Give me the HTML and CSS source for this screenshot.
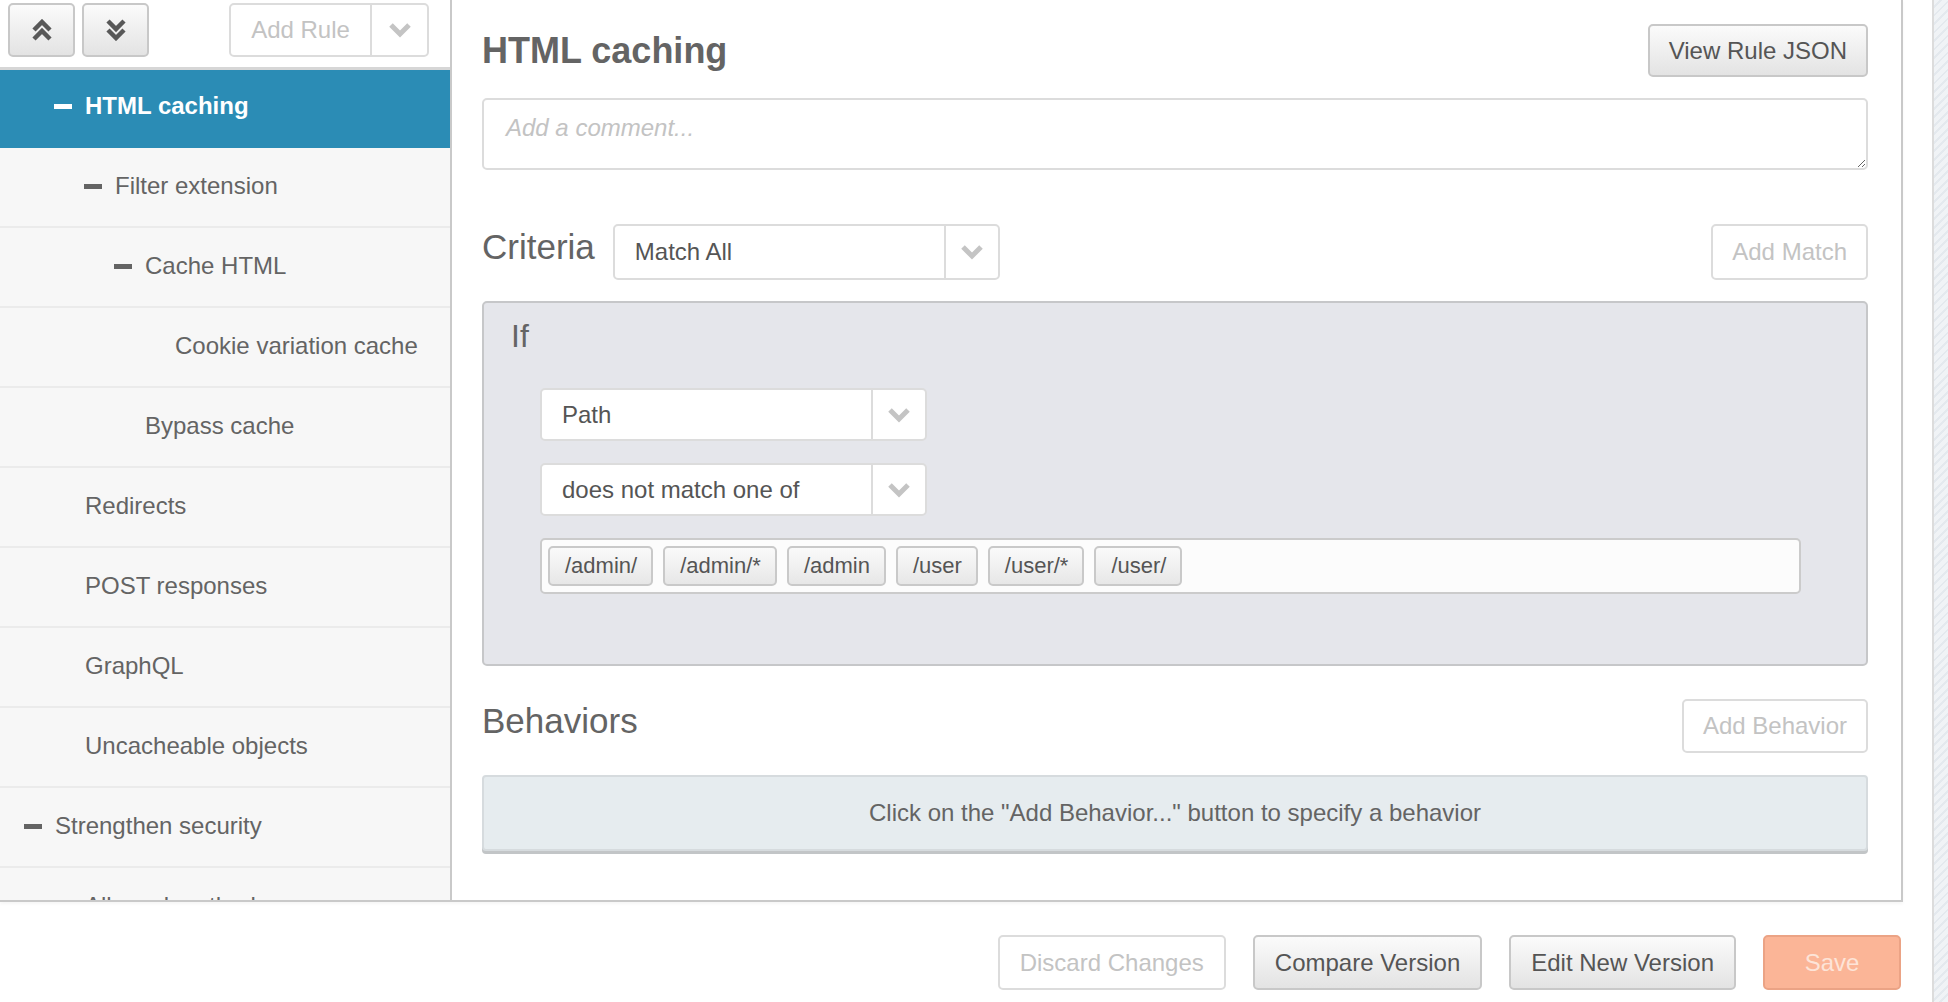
FILE: index.html
```html
<!DOCTYPE html>
<html lang="en">
<head>
<meta charset="utf-8">
<title>Rule editor – HTML caching</title>
<link rel="stylesheet" href="styles.css">
</head>
<body>
<div class="page">
  <div class="workspace">
    <div class="editor">
      <aside class="sidebar">
        <div class="tree-toolbar">
          <button class="btn icon-btn" aria-label="Collapse all">
            <svg width="24" height="22" viewBox="0 0 24 22"><polyline points="4,11 12,3 20,11" /><polyline points="4,20 12,12 20,20" /></svg>
          </button>
          <button class="btn icon-btn" aria-label="Expand all">
            <svg width="24" height="22" viewBox="0 0 24 22"><polyline points="4,2 12,10 20,2" /><polyline points="4,11 12,19 20,11" /></svg>
          </button>
          <div class="split-btn">
            <span class="split-label">Add Rule</span>
            <span class="split-caret"><svg class="chev" width="24" height="16" viewBox="0 0 24 16"><polyline points="3,3 12,12 21,3" /></svg></span>
          </div>
        </div>
        <ul class="tree">
          <li class="node l1 selected"><span class="dash"></span>HTML caching</li>
          <li class="node l2"><span class="dash"></span>Filter extension</li>
          <li class="node l3"><span class="dash"></span>Cache HTML</li>
          <li class="node l4">Cookie variation cache</li>
          <li class="node l3">Bypass cache</li>
          <li class="node l1">Redirects</li>
          <li class="node l1">POST responses</li>
          <li class="node l1">GraphQL</li>
          <li class="node l1">Uncacheable objects</li>
          <li class="node l0"><span class="dash"></span>Strengthen security</li>
          <li class="node l1">Allowed methods</li>
        </ul>
      </aside>

      <main class="rule">
        <div class="rule-head">
          <h1 class="rule-title">HTML caching</h1>
          <button class="btn btn-json">View Rule JSON</button>
        </div>
        <textarea class="comment" placeholder="Add a comment..."></textarea>

        <div class="section-head criteria-head">
          <div class="section-left">
            <h2 class="section-title">Criteria</h2>
            <div class="select select-match">
              <span class="select-value">Match All</span>
              <span class="select-caret"><svg class="chev" width="24" height="16" viewBox="0 0 24 16"><polyline points="3,3 12,12 21,3" /></svg></span>
            </div>
          </div>
          <button class="btn btn-disabled btn-match">Add Match</button>
        </div>

        <div class="if-box">
          <div class="if-label">If</div>
          <div class="cond">
            <div class="select">
              <span class="select-value">Path</span>
              <span class="select-caret"><svg class="chev" width="24" height="16" viewBox="0 0 24 16"><polyline points="3,3 12,12 21,3" /></svg></span>
            </div>
            <div class="select">
              <span class="select-value">does not match one of</span>
              <span class="select-caret"><svg class="chev" width="24" height="16" viewBox="0 0 24 16"><polyline points="3,3 12,12 21,3" /></svg></span>
            </div>
            <div class="tags">
              <span class="tag">/admin/</span>
              <span class="tag">/admin/*</span>
              <span class="tag">/admin</span>
              <span class="tag">/user</span>
              <span class="tag">/user/*</span>
              <span class="tag">/user/</span>
            </div>
          </div>
        </div>

        <div class="section-head behaviors-head">
          <h2 class="section-title">Behaviors</h2>
          <button class="btn btn-disabled">Add Behavior</button>
        </div>
        <div class="behavior-empty">Click on the "Add Behavior..." button to specify a behavior</div>
      </main>
    </div>

    <footer class="actions">
      <button class="btn btn-disabled">Discard Changes</button>
      <button class="btn">Compare Version</button>
      <button class="btn">Edit New Version</button>
      <button class="btn btn-save">Save</button>
    </footer>
  </div>
  <div class="gutter"></div>
</div>
</body>
</html>
```

FILE: styles.css
```css
* { box-sizing: border-box; }

body {
  margin: 0;
  width: 1948px;
  height: 1002px;
  overflow: hidden;
  background: #ffffff;
  color: #646464;
  font-family: "Liberation Sans", Arial, Helvetica, sans-serif;
}

.page {
  display: flex;
  height: 1002px;
}

.workspace {
  width: 1903px;
  display: flex;
  flex-direction: column;
}

.gutter {
  flex: 1;
  margin-left: 29px;
  border-left: 2px solid #dcdcdc;
  background: repeating-linear-gradient(135deg, #f0f3f6 0 4px, #e4e9ee 4px 6px);
}

/* ---------- editor frame ---------- */
.editor {
  display: flex;
  height: 902px;
  border-right: 2px solid #c9c9c9;
  border-bottom: 2px solid #c9c9c9;
  box-shadow: 0 2px 3px rgba(0, 0, 0, 0.04);
}

/* ---------- buttons ---------- */
.btn {
  height: 54px;
  padding: 0 19px;
  font-family: "Liberation Sans", Arial, Helvetica, sans-serif;
  font-size: 24px;
  color: #555555;
  border: 2px solid #c8c8c8;
  border-radius: 5px;
  background: linear-gradient(#fbfbfb, #e3e3e3);
  white-space: nowrap;
  cursor: pointer;
}

.btn-disabled {
  background: #ffffff;
  border-color: #dcdcdc;
  color: #c3c3c3;
}

.btn-save {
  width: 138px;
  background: #fbb597;
  border-color: #eba385;
  color: #fde4d8;
}

.btn-json { height: 53px; }
.btn-match { height: 56px; }

/* ---------- sidebar ---------- */
.sidebar {
  width: 452px;
  flex: none;
  background: #f7f7f7;
  border-right: 2px solid #c9c9c9;
  overflow: hidden;
  display: flex;
  flex-direction: column;
}

.tree-toolbar {
  height: 70px;
  flex: none;
  display: flex;
  align-items: flex-start;
  gap: 7px;
  padding: 3px 21px 0 8px;
  background: #ffffff;
  border-bottom: 3px solid #d6d6d6;
}

.icon-btn {
  width: 67px;
  height: 54px;
  padding: 0;
  display: flex;
  align-items: center;
  justify-content: center;
}

.icon-btn svg polyline {
  fill: none;
  stroke: #585858;
  stroke-width: 4.5;
  stroke-linecap: butt;
  stroke-linejoin: miter;
}

.split-btn {
  margin-left: auto;
  width: 200px;
  height: 54px;
  display: flex;
  border: 2px solid #dcdcdc;
  border-radius: 5px;
  background: #ffffff;
  color: #c3c3c3;
  font-size: 24px;
}

.split-label {
  flex: 1;
  display: flex;
  align-items: center;
  justify-content: center;
}

.split-caret {
  width: 57px;
  border-left: 2px solid #dcdcdc;
  display: flex;
  align-items: center;
  justify-content: center;
}

.chev polyline {
  fill: none;
  stroke: #c4c4c4;
  stroke-width: 5;
  stroke-linejoin: miter;
}

.tree {
  list-style: none;
  margin: 0;
  padding: 0;
}

.node {
  height: 80px;
  display: flex;
  align-items: center;
  padding-bottom: 2px;
  font-size: 24px;
  color: #646464;
  border-bottom: 2px solid #ebebeb;
  white-space: nowrap;
}

.node.l0 { padding-left: 55px; }
.node.l1 { padding-left: 85px; }
.node.l2 { padding-left: 115px; }
.node.l3 { padding-left: 145px; }
.node.l4 { padding-left: 175px; }

.dash {
  width: 18px;
  height: 5px;
  margin-left: -31px;
  margin-right: 13px;
  background: #646464;
  flex: none;
}

.node.selected {
  height: 78px;
  padding-bottom: 6px;
  background: #2b8cb5;
  color: #ffffff;
  font-weight: bold;
  border-bottom: 0;
}

.node.selected .dash { background: #ffffff; }

/* ---------- rule panel ---------- */
.rule {
  flex: 1;
  padding: 24px 33px 0 30px;
  display: flex;
  flex-direction: column;
}

.rule-head {
  display: flex;
  align-items: center;
  justify-content: space-between;
}

.rule-title {
  margin: 0;
  font-size: 36px;
  font-weight: bold;
  color: #646464;
}

.comment {
  display: block;
  margin-top: 21px;
  width: 100%;
  height: 72px;
  padding: 14px 22px;
  border: 2px solid #dcdcdc;
  border-radius: 5px;
  font-family: "Liberation Sans", Arial, Helvetica, sans-serif;
  font-size: 24px;
  color: #646464;
  resize: vertical;
}

.comment::placeholder {
  font-style: italic;
  color: #c3c3c3;
}

.section-head {
  display: flex;
  align-items: center;
  justify-content: space-between;
}

.section-left {
  display: flex;
  align-items: center;
  gap: 18px;
}

.section-title {
  margin: 0 0 11px;
  font-size: 35px;
  font-weight: normal;
  color: #646464;
}

.criteria-head { margin-top: 54px; }

.select {
  width: 387px;
  height: 53px;
  display: flex;
  background: #ffffff;
  border: 2px solid #dcdcdc;
  border-radius: 5px;
  font-size: 24px;
  color: #555555;
}

.select-match { height: 56px; }

.select-value {
  flex: 1;
  display: flex;
  align-items: center;
  padding-left: 20px;
  white-space: nowrap;
}

.select-caret {
  width: 54px;
  border-left: 2px solid #dcdcdc;
  display: flex;
  align-items: center;
  justify-content: center;
}

.if-box {
  margin-top: 21px;
  height: 365px;
  background: #e5e6eb;
  border: 2px solid #c6c7c9;
  border-radius: 5px;
  padding: 14px 65px 0 27px;
}

.if-label {
  font-size: 32px;
  line-height: 38px;
  color: #646464;
}

.cond {
  margin-top: 33px;
  padding-left: 29px;
  display: flex;
  flex-direction: column;
  align-items: flex-start;
  gap: 22px;
}

.tags {
  width: 100%;
  height: 56px;
  display: flex;
  align-items: center;
  gap: 10px;
  padding: 0 6px;
  background: #fcfcfc;
  border: 2px solid #cbcbcb;
  border-radius: 5px;
}

.tag {
  height: 40px;
  display: flex;
  align-items: center;
  padding: 0 14px 0 15px;
  font-size: 22px;
  color: #555555;
  border: 2px solid #c9c9c9;
  border-radius: 5px;
  background: linear-gradient(#fafafa, #e7e7e7);
}

.behaviors-head { margin-top: 33px; }

.behavior-empty {
  margin-top: 22px;
  height: 76px;
  display: flex;
  align-items: center;
  justify-content: center;
  background: #e6ecef;
  border: 2px solid #d6dbde;
  border-radius: 4px;
  box-shadow: 0 3px 0 #c2c5c7;
  font-size: 24px;
  color: #646464;
}

/* ---------- footer actions ---------- */
.actions {
  display: flex;
  justify-content: flex-end;
  gap: 27px;
  padding: 33px 2px 0 0;
}

.actions .btn {
  height: 55px;
  padding: 0 20px;
}

.actions .btn-save { padding: 0; }
```
